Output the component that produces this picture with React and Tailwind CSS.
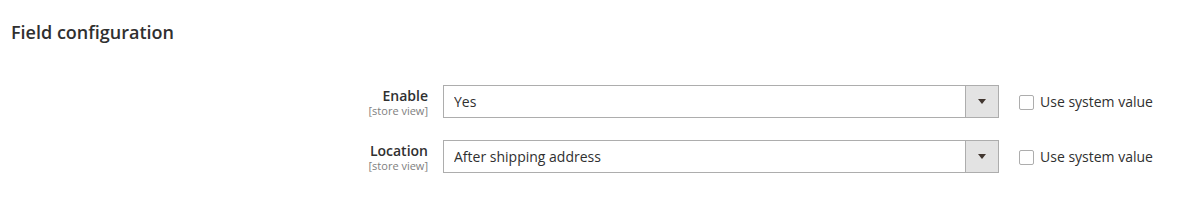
import { useState } from 'react'

const FIELDS = [
  { label: 'Enable', value: 'Yes', options: ['Yes', 'No'] },
  { label: 'Location', value: 'After shipping address', options: ['After shipping address', 'Before shipping address'] },
]

function Row({ field }) {
  const [value, setValue] = useState(field.value)
  const [useSystem, setUseSystem] = useState(false)

  return (
    <div className="flex items-start">
      <div className="w-[428px] shrink-0 text-right pt-[2px]">
        <div className="text-[14px] leading-[18px] font-semibold text-[#303030]">{field.label}</div>
        <div className="text-[11px] leading-[12px] text-[#808080]">[store view]</div>
      </div>
      <div className="ml-[15px] relative w-[556px] h-[33px] border border-[#adadad] bg-white flex">
        <select
          value={value}
          onChange={(e) => setValue(e.target.value)}
          className="appearance-none flex-1 h-full pl-[10px] text-[14px] text-[#303030] bg-transparent outline-none"
        >
          {field.options.map((o) => (
            <option key={o}>{o}</option>
          ))}
        </select>
        <div className="w-[33px] h-full bg-[#e3e3e3] border-l border-[#adadad] flex items-center justify-center pointer-events-none">
          <svg width="8" height="5" viewBox="0 0 8 5">
            <path d="M0 0h8L4 5z" fill="#41362f" />
          </svg>
        </div>
      </div>
      <label className="ml-[20px] flex items-center h-[33px] cursor-pointer">
        <input
          type="checkbox"
          checked={useSystem}
          onChange={(e) => setUseSystem(e.target.checked)}
          className="appearance-none w-[15px] h-[15px] border border-[#adadad] rounded-[2px] bg-white mt-[2px]"
        />
        <span className="ml-[6px] text-[14px] text-[#303030]">Use system value</span>
      </label>
    </div>
  )
}

export default function App() {
  return (
    <div className="w-[1197px] h-[209px] bg-white font-['Open_Sans',sans-serif]">
      <div className="pt-[20px] pl-[11px] text-[18px] leading-[24px] font-semibold text-[#303030]">
        Field configuration
      </div>
      <div className="mt-[41px] flex flex-col gap-[22px]">
        {FIELDS.map((f) => (
          <Row key={f.label} field={f} />
        ))}
      </div>
    </div>
  )
}
